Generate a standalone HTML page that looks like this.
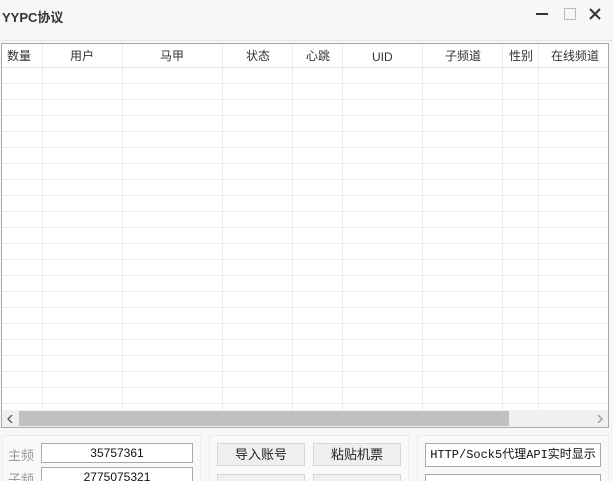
<!DOCTYPE html>
<html><head><meta charset="utf-8"><style>
*{box-sizing:border-box;margin:0;padding:0}
body{width:613px;height:500px;background:#fff;font-family:"Liberation Sans","Noto Sans CJK SC",sans-serif;position:relative;overflow:hidden}
.top{position:absolute;left:0;top:0;width:613px;height:481px;background:#f7f7f7;overflow:hidden}
.title{position:absolute;left:2px;top:7px;font-size:13px;font-weight:bold;color:#333}
.tb{position:absolute;left:0;top:40px;width:613px;height:1px;background:#e4e4e4}
.table{position:absolute;left:1px;top:43px;width:608px;height:385px;border:1px solid #a9a9a9;background:#fff;overflow:hidden}
.vl{position:absolute;top:0;height:366px;width:1px;background:#ececec}
.hl{position:absolute;left:0;width:606px;height:1px;background:#ececec}
.h{position:absolute;top:3px;height:18px;line-height:18px;font-size:12px;color:#333;text-align:center}
.sb{position:absolute;left:0;top:366px;width:606px;height:17px;background:#f0f0f0}
.thumb{position:absolute;left:17px;top:1px;width:490px;height:15px;background:#c1c1c1}
.panel{position:absolute;top:435px;height:60px;background:#f9f9f9;border:1px solid #ececec}
.lbl{position:absolute;left:8px;font-size:13px;color:#999}
.inp{position:absolute;background:#fff;border:1px solid #a9a9a9;font-size:12px;text-align:center;line-height:18px;color:#111}
.mono{font-family:"Liberation Mono","Noto Sans CJK SC",monospace}
.btn{position:absolute;width:88px;height:23px;background:#efefef;border:1px solid #d6d6d6;font-size:13px;text-align:center;line-height:21px;color:#222}
</style></head><body>
<div class="top">
<div class="title">YYPC协议</div>
<div style="position:absolute;left:536px;top:13px;width:12px;height:2px;background:#333"></div>
<div style="position:absolute;left:564px;top:8px;width:12px;height:12px;border:1px solid #bbb"></div>
<svg style="position:absolute;left:589px;top:8px" width="12" height="12"><path d="M1 1L11 11M11 1L1 11" stroke="#333" stroke-width="2"/></svg>
<div class="tb"></div>
<div class="table">
<div class="vl" style="left:40px"></div><div class="vl" style="left:120px"></div><div class="vl" style="left:220px"></div><div class="vl" style="left:290px"></div><div class="vl" style="left:340px"></div><div class="vl" style="left:420px"></div><div class="vl" style="left:500px"></div><div class="vl" style="left:536px"></div>
<div class="hl" style="top:23px;background:#e4e4e4"></div>
<div class="hl" style="top:39px"></div><div class="hl" style="top:55px"></div><div class="hl" style="top:71px"></div><div class="hl" style="top:87px"></div><div class="hl" style="top:103px"></div><div class="hl" style="top:119px"></div><div class="hl" style="top:135px"></div><div class="hl" style="top:151px"></div><div class="hl" style="top:167px"></div><div class="hl" style="top:183px"></div><div class="hl" style="top:199px"></div><div class="hl" style="top:215px"></div><div class="hl" style="top:231px"></div><div class="hl" style="top:247px"></div><div class="hl" style="top:263px"></div><div class="hl" style="top:279px"></div><div class="hl" style="top:295px"></div><div class="hl" style="top:311px"></div><div class="hl" style="top:327px"></div><div class="hl" style="top:343px"></div><div class="hl" style="top:359px"></div>
<div class="h" style="left:5px">数量</div>
<div class="h" style="left:68px">用户</div>
<div class="h" style="left:158px">马甲</div>
<div class="h" style="left:244px">状态</div>
<div class="h" style="left:304px">心跳</div>
<div class="h" style="left:370px;top:4px">UID</div>
<div class="h" style="left:443px">子频道</div>
<div class="h" style="left:507px">性别</div>
<div class="h" style="left:549px">在线频道</div>
<div class="sb"><div class="thumb"></div>
<svg style="position:absolute;left:5px;top:5px" width="6" height="8"><path d="M5 0L1 4L5 8" stroke="#555" fill="none" stroke-width="1.3"/></svg>
<svg style="position:absolute;left:595px;top:5px" width="6" height="8"><path d="M1 0L5 4L1 8" stroke="#999" fill="none" stroke-width="1.3"/></svg></div>
</div>
<div class="panel" style="left:2px;width:199px"></div>
<div class="panel" style="left:209px;width:200px"></div>
<div class="panel" style="left:417px;width:192px"></div>
<div class="lbl" style="top:445px">主频</div>
<div class="lbl" style="top:469px">子频</div>
<div class="inp" style="left:41px;top:443px;width:152px;height:20px">35757361</div>
<div class="inp" style="left:41px;top:467px;width:152px;height:20px">2775075321</div>
<div class="btn" style="left:217px;top:443px">导入账号</div>
<div class="btn" style="left:313px;top:443px">粘贴机票</div>
<div class="btn" style="left:217px;top:474px"></div>
<div class="btn" style="left:313px;top:474px"></div>
<div class="inp mono" style="left:425px;top:443px;width:176px;height:24px;line-height:22px;font-size:12px">HTTP/Sock5代理API实时显示</div>
<div class="inp" style="left:425px;top:474px;width:176px;height:24px"></div>
</div>
</body></html>
